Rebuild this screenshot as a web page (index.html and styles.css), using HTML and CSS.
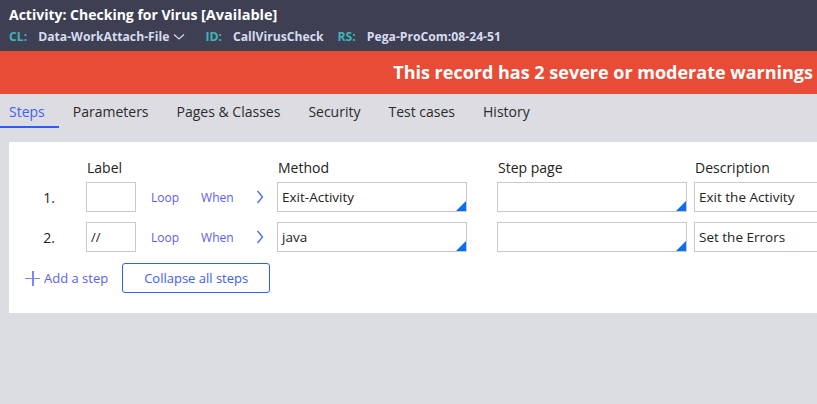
FILE: index.html
```html
<!DOCTYPE html>
<html lang="en">
<head>
    <meta charset="UTF-8">
    <title>Activity: Checking for Virus</title>
    <link rel="stylesheet" href="styles.css">
</head>
<body>
    <header class="record-header">
        <div class="record-title">Activity: Checking for Virus <span class="status">[Available]</span></div>
        <div class="record-meta">
            <span class="key">CL:</span>
            <span class="val">Data-WorkAttach-File</span>
            <svg class="caret" width="12" height="8" viewBox="0 0 12 8"><path d="M1 1.5 L6 6 L11 1.5" fill="none" stroke="#d6dbf0" stroke-width="1.2"/></svg>
            <span class="key">ID:</span>
            <span class="val">CallVirusCheck</span>
            <span class="key">RS:</span>
            <span class="val">Pega-ProCom:08-24-51</span>
        </div>
    </header>

    <div class="warning-banner">This record has 2 severe or moderate warnings</div>

    <nav class="tabs">
        <a class="tab active">Steps</a>
        <a class="tab">Parameters</a>
        <a class="tab">Pages &amp; Classes</a>
        <a class="tab">Security</a>
        <a class="tab">Test cases</a>
        <a class="tab">History</a>
    </nav>

    <main class="content">
        <section class="steps-panel">
            <div class="step-grid">
                <div class="head"></div>
                <div class="head">Label</div>
                <div class="head"></div>
                <div class="head">Method</div>
                <div class="head">Step page</div>
                <div class="head">Description</div>

                <div class="num">1.</div>
                <div class="field label-field"></div>
                <div class="links"><a>Loop</a><a>When</a><svg class="chev" width="8" height="14" viewBox="0 0 8 14"><path d="M1.5 1 L6.5 7 L1.5 13" fill="none" stroke="#3e6cf2" stroke-width="1.3"/></svg></div>
                <div class="field picker">Exit-Activity</div>
                <div class="field picker"></div>
                <div class="field desc">Exit the Activity</div>

                <div class="num">2.</div>
                <div class="field label-field">//</div>
                <div class="links"><a>Loop</a><a>When</a><svg class="chev" width="8" height="14" viewBox="0 0 8 14"><path d="M1.5 1 L6.5 7 L1.5 13" fill="none" stroke="#3e6cf2" stroke-width="1.3"/></svg></div>
                <div class="field picker">java</div>
                <div class="field picker"></div>
                <div class="field desc">Set the Errors</div>
            </div>

            <div class="step-actions">
                <a class="add-step"><span class="plus"></span>Add a step</a>
                <button class="btn-outline">Collapse all steps</button>
            </div>
        </section>
    </main>
</body>
</html>
```

FILE: styles.css
```css
body {
    margin: 0;
    width: 817px;
    height: 404px;
    overflow: hidden;
    font-family: "Open Sans", "Noto Sans", sans-serif;
    background: #dcdde2;
    color: #222;
}

.record-header {
    background: #3e3f53;
    height: 51px;
    padding: 5px 9px 0;
    box-sizing: border-box;
}
.record-title {
    color: #fff;
    font-size: 14px;
    font-weight: 700;
    line-height: 20px;
}
.record-title .status {
    font-size: 14.5px;
}
.record-meta {
    display: flex;
    align-items: center;
    font-size: 12.2px;
    font-weight: 700;
    line-height: 20px;
    margin-top: 2px;
}
.record-meta .key {
    color: #3fb4b8;
    margin-right: 11px;
}
.record-meta .val {
    color: #d6dbf0;
    margin-right: 14px;
}
.record-meta .caret {
    margin: 0 20px 0 -10px;
}

.warning-banner {
    background: #e94c36;
    color: #fff;
    font-size: 18px;
    font-weight: 700;
    height: 43px;
    line-height: 43px;
    text-align: right;
    padding-right: 4px;
    white-space: nowrap;
}

.tabs {
    display: flex;
    height: 34px;
    background: #dcdce2;
}
.tab {
    padding: 3px 14px 0;
    font-size: 14px;
    line-height: 29px;
    color: #2b2b2b;
    border-bottom: 2px solid transparent;
}
.tab:first-child {
    padding-left: 9px;
}
.tab.active {
    color: #4560f0;
    border-color: #2d5cf6;
}

.content {
    padding: 14px 0 0 9px;
}
.steps-panel {
    background: #fff;
    height: 171px;
    box-sizing: border-box;
    padding-top: 17px;
}

/* number | label | loop/when | method | step page | description */
.step-grid {
    display: grid;
    grid-template-columns: 77px 50px 141px 220px 197px 123px;
    row-gap: 10px;
    justify-items: start;
    align-items: center;
    font-size: 14px;
}
.head {
    line-height: 17px;
    margin-bottom: -4px;
    padding-left: 1px;
}
.num {
    justify-self: end;
    padding-right: 31px;
}
.field {
    position: relative;
    width: 190px;
    height: 30px;
    border: 1px solid #c9c9c9;
    box-sizing: border-box;
    padding: 0 4px;
    font-size: 13.5px;
    line-height: 28px;
    white-space: nowrap;
    overflow: hidden;
}
.field.picker::after {
    content: "";
    position: absolute;
    right: 0;
    bottom: 0;
    border-style: solid;
    border-width: 0 0 10px 10px;
    border-color: transparent transparent #0b6df4 transparent;
}
/* description box runs on past the panel edge */
.field.desc {
    width: 123px;
    border-right: 0;
}
.label-field {
    width: 50px;
    font-size: 13px;
}
.links {
    display: flex;
    align-items: center;
    font-size: 12px;
    color: #5b5ef2;
    padding-left: 15px;
}
.links a {
    margin-right: 22px;
}

.step-actions {
    display: flex;
    align-items: center;
    margin-top: 11px;
    padding-left: 16px;
}
.add-step {
    display: flex;
    align-items: center;
    color: #5b5ef2;
    font-size: 13px;
    margin-right: 14px;
}
.plus {
    position: relative;
    width: 15px;
    height: 15px;
    margin-right: 4px;
}
.plus::before,
.plus::after {
    content: "";
    position: absolute;
    background: #7b85f4;
}
.plus::before {
    left: 7px;
    top: 0;
    width: 1.5px;
    height: 15px;
}
.plus::after {
    top: 7px;
    left: 0;
    width: 15px;
    height: 1.5px;
}
.btn-outline {
    height: 30px;
    width: 148px;
    border: 1px solid #2f62f6;
    border-radius: 3px;
    background: #fff;
    color: #3c5df2;
    font-family: inherit;
    font-size: 13px;
}
```
